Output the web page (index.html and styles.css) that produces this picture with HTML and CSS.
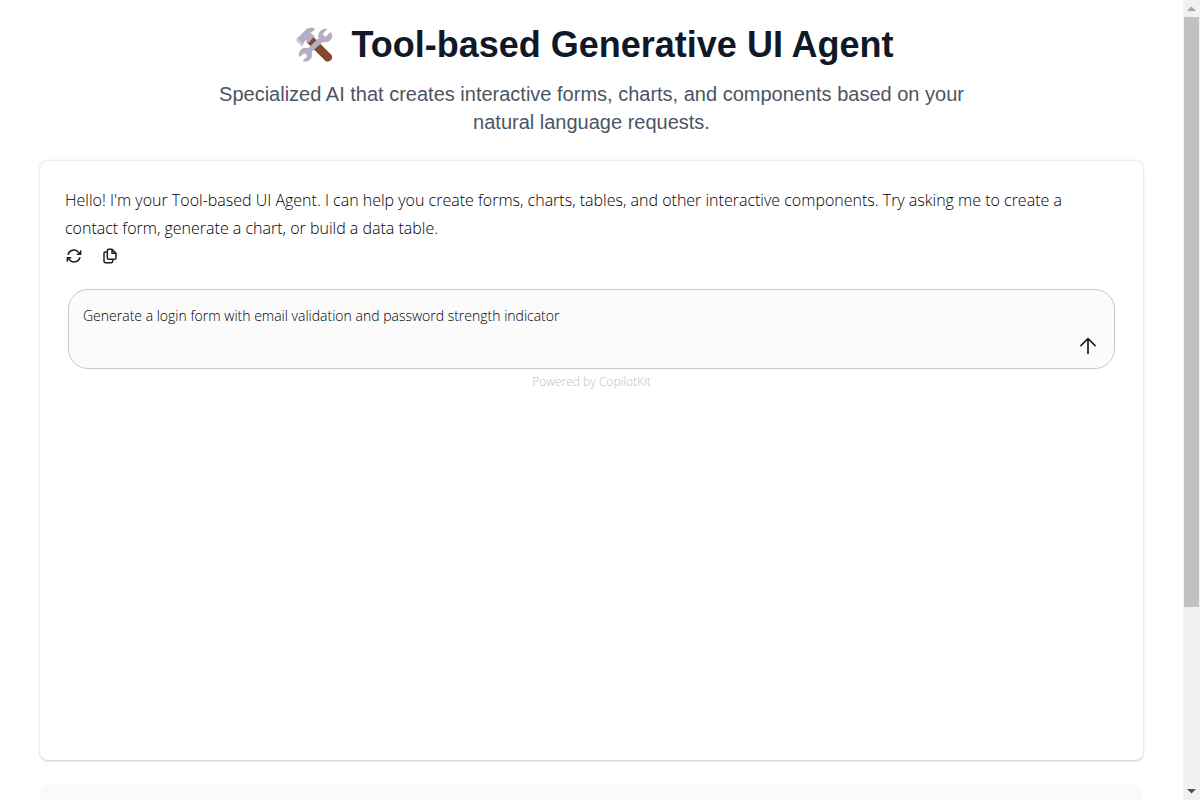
FILE: index.html
```
<!DOCTYPE html>
<html lang="en">
<head>
<meta charset="utf-8">
<title>Tool-based Generative UI Agent</title>
<link rel="stylesheet" href="styles.css">
</head>
<body>
<div class="viewport">
  <main class="page">
    <header class="intro">
      <h1 class="title">
        <svg class="title-icon" viewBox="0 0 36 36" aria-hidden="true">
          <path d="M12 12L16 9L35 28Q37 32 33 34Q30 36 28 33L10 15Z" fill="#84472f"/>
          <path d="M1 11L10 2Q13 0 18 1V3L14 6L18 9L12 16L9 13L6 18L0 12Z" fill="#b5adc1"/>
          <path d="M0 11L7 17L6 20L0 14Z" fill="#d3c8dc"/>
          <path d="M31 2L26 7L29 10L34 5Q38 10 33 14Q30 16 26 15L15 25Q17 30 13 33Q10 36 6 34L11 29L8 26L3 30Q1 25 5 22Q8 20 12 21L22 11Q21 6 25 3Q28 1 31 2Z" fill="#b5adc1"/>
        </svg>
        <span>Tool-based Generative UI Agent</span>
      </h1>
      <p class="subtitle">Specialized AI that creates interactive forms, charts, and components based on your natural language requests.</p>
    </header>
    <section class="chat">
      <div class="message">
        <p class="message-text">Hello! I'm your Tool-based UI Agent. I can help you create forms, charts, tables, and other interactive components. Try asking me to create a contact form, generate a chart, or build a data table.</p>
        <div class="actions">
          <button class="icon-button" type="button" aria-label="Regenerate">
            <svg class="action-icon" viewBox="0 0 24 24" fill="none" stroke="currentColor" stroke-width="2.2" stroke-linecap="round" stroke-linejoin="round"><path d="M17 9.300h5V4.300M2 19.700v-5h5M2 14.700l3.500 3.200a9 9 0 0 0 15.300-3.200M3.200 9.300a9 9 0 0 1 15.300-3.200L22 9.300"/></svg>
          </button>
          <button class="icon-button" type="button" aria-label="Copy">
            <svg class="action-icon" viewBox="0 0 24 24" fill="none" stroke="currentColor" stroke-width="2.200" stroke-linecap="round" stroke-linejoin="round"><path d="M10 2h5l6 6v7a2 2 0 0 1-2 2h-9a2 2 0 0 1-2-2V4a2 2 0 0 1 2-2ZM15 2v6h6M8 6H5a2 2 0 0 0-2 2v12a2 2 0 0 0 2 2h9a2 2 0 0 0 2-2v-3"/></svg>
          </button>
        </div>
      </div>
      <form class="composer">
        <textarea class="prompt" rows="1" aria-label="Message">Generate a login form with email validation and password strength indicator</textarea>
        <div class="composer-controls">
          <button class="send" type="button" aria-label="Send">
            <svg class="send-icon" viewBox="0 0 24 24" fill="none" stroke="currentColor" stroke-width="2" stroke-linecap="round" stroke-linejoin="round"><path d="M3.500 11.500 12 3l8.500 8.500M12 3v18"/></svg>
          </button>
        </div>
      </form>
      <p class="powered">Powered by CopilotKit</p>
    </section>
    <section class="next-panel"></section>
  </main>
  <div class="scrollbar" aria-hidden="true">
    <svg class="scroll-arrow up" viewBox="0 0 17 17"><path d="M4 11 8.500 6.500 13 11Z"/></svg>
    <div class="scroll-track"><div class="scroll-thumb"></div></div>
    <svg class="scroll-arrow down" viewBox="0 0 17 17"><path d="M4 6 8.500 10.500 13 6Z"/></svg>
  </div>
</div>
</body>
</html>
```
FILE: styles.css
```
* { box-sizing: border-box; }
body, h1, p { margin: 0; }
body { background: #fff; font-family: "Liberation Sans", Arial, sans-serif; }
button { border: 0; padding: 0; background: none; color: #1c1c1c; cursor: pointer; }
svg { display: block; }

.viewport { display: flex; height: 100vh; overflow: hidden; }
.page { flex: 1; min-width: 0; padding: 24px 40px 0; overflow: hidden; }

.intro { display: flex; flex-direction: column; align-items: center; gap: 14px; margin-bottom: 24px; text-align: center; }
.title { display: flex; align-items: center; gap: 18px; padding-left: 7px; font-size: 36px; line-height: 42px; font-weight: 700; color: #111827; }
.title-icon { width: 37px; height: 36px; }
.subtitle { max-width: 768px; font-size: 20px; line-height: 28px; color: #4b5563; }

.chat {
  min-height: 600px;
  padding: 26px 25px;
  border-radius: 8px;
  box-shadow: 0 1px 3px rgba(0, 0, 0, 0.16), 0 1px 2px rgba(0, 0, 0, 0.08), inset 0 1px 0 #ececec;
  font-family: "Segoe UI", "Open Sans", "Noto Sans", sans-serif;
}
.message-text { padding-right: 32px; font-size: 16px; font-weight: 300; line-height: 28px; color: #000; }
.actions { display: flex; gap: 18px; }
.icon-button { display: grid; place-items: center; width: 18px; height: 28px; }
.action-icon { width: 16px; height: 16px; }

.composer {
  margin: 19px 3px 0;
  padding: 14px;
  height: 80px;
  border: 1px solid #c8c8c8;
  border-radius: 20px;
  background: #fbfbfb;
}
.prompt {
  display: block;
  width: 100%;
  height: 24px;
  padding: 0;
  border: 0;
  outline: 0;
  resize: none;
  overflow: hidden;
  background: transparent;
  font: 300 14px/24px "Segoe UI", "Open Sans", "Noto Sans", sans-serif;
  color: #000;
}
.composer-controls { display: flex; justify-content: flex-end; }
.send { display: grid; place-items: center; width: 24px; height: 36px; }
.send-icon { width: 20px; height: 20px; }
.powered { padding-top: 4px; text-align: center; font-size: 12px; font-weight: 300; line-height: 18px; color: #c0c0c0; }

.next-panel { min-height: 200px; margin-top: 24px; border-radius: 8px; background: #f9fafb; }

.scrollbar { display: flex; flex-direction: column; width: 17px; background: #f1f1f1; }
.scroll-arrow { width: 17px; height: 17px; }
.up { fill: #a3a3a3; }
.down { fill: #505050; }
.scroll-track { flex: 1; padding: 0 1px; }
.scroll-thumb { height: 77%; background: #c1c1c1; }
```
